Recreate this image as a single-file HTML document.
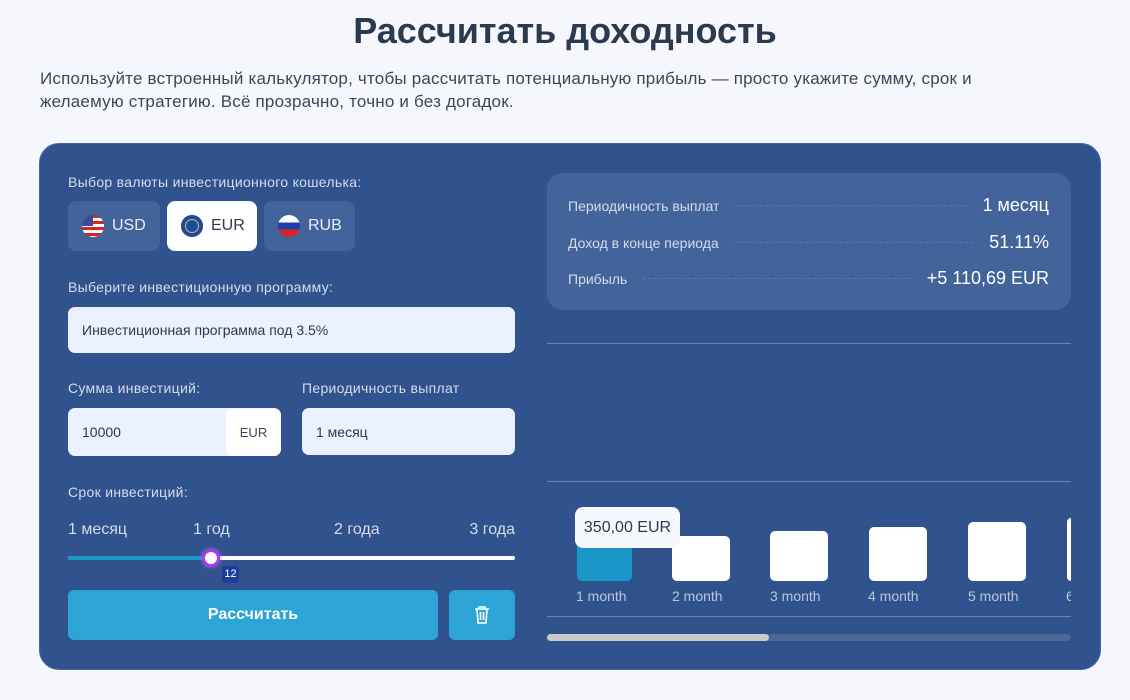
<!DOCTYPE html>
<html><head><meta charset="utf-8"><style>
*{box-sizing:border-box;margin:0;padding:0}
body{width:1130px;height:700px;background:#f5f7fd;font-family:"Liberation Sans",sans-serif;position:relative;overflow:hidden}
.a{position:absolute}
h1{position:absolute;left:0;width:1130px;top:10px;text-align:center;font-size:36px;font-weight:bold;color:#2b3a4f}
.p{left:40px;top:67px;width:960px;font-size:17px;line-height:23px;color:#3b4658;letter-spacing:.2px}
.card{left:39px;top:143px;width:1062px;height:527px;background:#30538d;border-radius:20px;border:1px solid #4666a0}
.lbl{font-size:14px;color:#d5dcea;letter-spacing:.3px}
.cb{top:201px;height:50px;border-radius:8px;background:#43649a;color:#e8edf6;font-size:16px;display:flex;align-items:center;padding-left:14px;gap:8px}
.fl{width:22px;height:22px;border-radius:50%;overflow:hidden;display:inline-block}
.inp{background:#ebf1fe;border-radius:7px;font-size:14px;color:#2b3a4f;padding-left:14px;display:flex;align-items:center}
.sl{top:521px;font-size:16px;color:#d5dcea}
.row{left:568px;width:481px;display:flex;align-items:center;font-size:14px;color:#d5dcea}
.row .d{flex:1;border-top:1px dashed #5a78a8;margin:0 16px}
.row b{font-weight:normal;color:#fff;font-size:18px}
.bar{background:#fff;border-radius:5px;width:58px}
.ml{top:588px;font-size:14px;color:#b9c6dc}
</style></head><body>
<h1>Рассчитать доходность</h1>
<div class="a p">Используйте встроенный калькулятор, чтобы рассчитать потенциальную прибыль — просто укажите сумму, срок и желаемую стратегию. Всё прозрачно, точно и без догадок.</div>
<div class="a card"></div>
<div class="a lbl" style="left:68px;top:174px">Выбор валюты инвестиционного кошелька:</div>
<div class="a cb" style="left:68px;width:92px"><span class="fl" style="background:repeating-linear-gradient(#d22 0 3px,#fff 3px 6px)"><span style="display:block;width:11px;height:11px;background:#3b4a9a"></span></span>USD</div>
<div class="a cb" style="left:167px;width:90px;background:#fff;color:#2b3a4f"><span class="fl" style="background:#1a4aa8;box-shadow:inset 0 0 0 4px #1a4aa8,inset 0 0 0 5px #e0c020"></span>EUR</div>
<div class="a cb" style="left:264px;width:91px"><span class="fl" style="background:linear-gradient(#fff 0 33%,#1c3fb0 33% 66%,#d22 66%)"></span>RUB</div>
<div class="a lbl" style="left:68px;top:279px">Выберите инвестиционную программу:</div>
<div class="a inp" style="left:68px;top:307px;width:447px;height:46px">Инвестиционная программа под 3.5%</div>
<div class="a lbl" style="left:68px;top:380px">Сумма инвестиций:</div>
<div class="a lbl" style="left:302px;top:380px">Периодичность выплат</div>
<div class="a inp" style="left:68px;top:408px;width:213px;height:48px">10000</div>
<div class="a" style="left:226px;top:409px;width:55px;height:47px;background:#fff;border-radius:7px;font-size:13px;color:#3b4658;display:flex;align-items:center;justify-content:center">EUR</div>
<div class="a inp" style="left:302px;top:408px;width:213px;height:47px">1 месяц</div>
<div class="a lbl" style="left:68px;top:484px">Срок инвестиций:</div>
<div class="a sl" style="left:68px">1 месяц</div>
<div class="a sl" style="left:193px">1 год</div>
<div class="a sl" style="left:334px">2 года</div>
<div class="a sl" style="right:615px">3 года</div>
<div class="a" style="left:68px;top:556px;width:447px;height:4px;background:#fff;border-radius:2px"></div>
<div class="a" style="left:68px;top:556px;width:143px;height:4px;background:#1a96c8;border-radius:2px"></div>
<div class="a" style="left:202px;top:549px;width:18px;height:18px;border-radius:50%;background:#fff;border:3px solid #a33fe8;box-shadow:0 0 4px #b060ff"></div>
<div class="a" style="left:222px;top:566px;width:17px;height:17px;background:#1e3ca0;border-radius:3px;color:#fff;font-size:11px;text-align:center;line-height:17px">12</div>
<div class="a" style="left:68px;top:590px;width:370px;height:50px;background:#2ca4d6;border-radius:6px;color:#fff;font-size:16px;font-weight:bold;text-align:center;line-height:50px">Рассчитать</div>
<div class="a" style="left:449px;top:590px;width:66px;height:50px;background:#2ca4d6;border-radius:6px"><svg class="a" style="left:24px;top:15px" width="18" height="20" viewBox="0 0 18 20" fill="none" stroke="#fff" stroke-width="1.6"><path d="M2 4h14M6 4V2h6v2M4 4l1 14h8l1-14M7.5 7v8M10.5 7v8"/></svg></div>

<div class="a" style="left:547px;top:173px;width:524px;height:137px;background:#43649a;border-radius:16px"></div>
<div class="a row" style="top:195px">Периодичность выплат<span class="d"></span><b>1 месяц</b></div>
<div class="a row" style="top:232px">Доход в конце периода<span class="d"></span><b>51.11%</b></div>
<div class="a row" style="top:268px">Прибыль<span class="d"></span><b>+5 110,69 EUR</b></div>
<div class="a" style="left:547px;top:343px;width:524px;height:1px;background:#6582b0"></div>
<div class="a" style="left:547px;top:481px;width:524px;height:1px;background:#6582b0"></div>
<div class="a" style="left:547px;top:616px;width:524px;height:1px;background:#6582b0"></div>
<div class="a bar" style="left:577px;top:538px;width:55px;height:43px;background:#1a96c8"></div>
<div class="a bar" style="left:672px;top:536px;height:45px"></div>
<div class="a bar" style="left:770px;top:531px;height:50px"></div>
<div class="a bar" style="left:869px;top:527px;height:54px"></div>
<div class="a bar" style="left:968px;top:522px;height:59px"></div>
<div class="a bar" style="left:1067px;top:518px;width:4px;height:63px;border-radius:4px 0 0 4px"></div>
<div class="a" style="left:575px;top:507px;width:105px;height:41px;background:#f5f7fd;border-radius:8px;font-size:16px;color:#2b3a4f;line-height:41px;text-align:center">350,00 EUR</div>
<div class="a ml" style="left:576px">1 month</div>
<div class="a ml" style="left:672px">2 month</div>
<div class="a ml" style="left:770px">3 month</div>
<div class="a ml" style="left:868px">4 month</div>
<div class="a ml" style="left:968px">5 month</div>
<div class="a ml" style="left:1066px;width:5px;overflow:hidden">6</div>
<div class="a" style="left:547px;top:634px;width:524px;height:7px;background:#4b6898;border-radius:4px"></div>
<div class="a" style="left:547px;top:634px;width:222px;height:7px;background:#cacaca;border-radius:4px"></div>
</body></html>
